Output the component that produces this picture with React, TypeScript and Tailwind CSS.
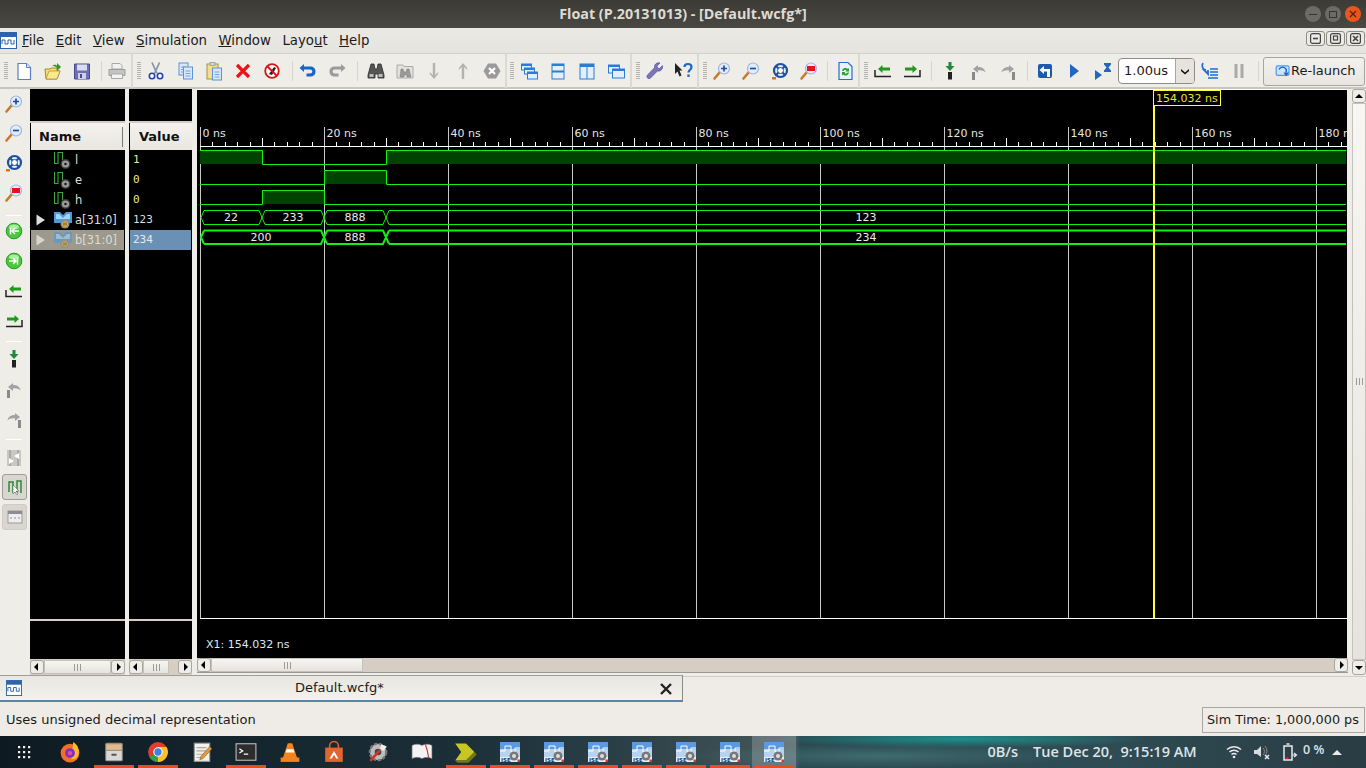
import React from "react";

const S = ({ children, s = 20, className = "" }: { children: React.ReactNode; s?: number; className?: string }) => (
  <svg width={s} height={s} viewBox="0 0 20 20" className={"shrink-0 " + className}>{children}</svg>
);

const IconNew = () => <S><path d="M4 2.500h8.500l4 4v12H4z" fill="#fff" stroke="#5b7fc0" strokeWidth="1.200" /><path d="M12.500 2.500v4h4" fill="#dfe8f7" stroke="#5b7fc0" /></S>;
const IconOpen = () => <S><path d="M2 8h5l1 -1h6v3h3l-3 8H3z" fill="#f7dc6f" stroke="#a78a2a" /><path d="M3 18l3-8h11l-3 8z" fill="#fbe98e" stroke="#a78a2a" strokeWidth=".7" /><path d="M9 5c3-2 4-1.500 5 0V2l4 4-4 4V7c-1-1.500-3-2-5-2z" fill="#2e9a22" /></S>;
const IconSave = () => <S><path d="M2.500 3h15v15h-15z" fill="#6f6fb8" stroke="#484a90" /><rect x="5" y="3.500" width="10" height="6" fill="#dcdcf0" /><rect x="6" y="12" width="8" height="6" fill="#cfcfe6" /><rect x="8" y="13" width="2" height="4" fill="#484a90" /></S>;
const IconPrint = () => <S><path d="M5 8V2.500h8l2 2V8z" fill="#f2f2f2" stroke="#a7a7a7" /><path d="M2 8.500h16v6H2z" fill="#c4c4c4" stroke="#9c9c9c" /><path d="M4.500 13h11v4.500h-11z" fill="#f4f4f4" stroke="#a7a7a7" /></S>;
const IconCut = () => <S><path d="M6 1.500l5 11M13.500 1.500l-5 11" stroke="#8b95a8" strokeWidth="1.800" fill="none" /><circle cx="6" cy="15" r="2.700" fill="#fff" stroke="#2643a8" strokeWidth="1.600" /><circle cx="14" cy="15" r="2.700" fill="#fff" stroke="#2643a8" strokeWidth="1.600" /></S>;
const Page = ({ x, y, w = 9, h = 12 }: { x: number; y: number; w?: number; h?: number }) => <g><rect x={x} y={y} width={w} height={h} fill="#d8e8fb" stroke="#5c93d6" /><path d={`M${x + 2} ${y + 4}h${w - 4}M${x + 2} ${y + 6.5}h${w - 4}M${x + 2} ${y + 9}h${w - 4}`} stroke="#5c93d6" strokeWidth=".8" /></g>;
const IconCopy = () => <S><Page x={4} y={2} /><Page x={8.500} y={6} /></S>;
const IconPaste = () => <S><rect x="3" y="3" width="11" height="15" fill="#f2df8b" stroke="#a79143" /><rect x="6" y="1.500" width="5" height="3" fill="#d2d2d2" stroke="#888" strokeWidth=".6" /><Page x={8.500} y={7} w={9} /></S>;
const IconDel = () => <S><path d="M4 4l12 12M16 4L4 16" stroke="#e9141a" strokeWidth="3.200" /></S>;
const IconStop = () => <S><circle cx="10" cy="10" r="6.800" fill="#fff" stroke="#d81418" strokeWidth="1.800" /><path d="M7 13l5-7 2 1-4 7z" fill="#222" /><path d="M5.500 5.500l9 9" stroke="#d81418" strokeWidth="1.800" /></S>;
const IconUndo = ({ c = "#1467c8", flip = false }: { c?: string; flip?: boolean }) => <S><g transform={flip ? "translate(20 0) scale(-1 1)" : undefined}><path d="M6 5.500h6c3.500 0 5.500 2 5.500 5s-2 5-5.500 5H8.500v-3H12c1.500 0 2.300-.7 2.300-2s-.8-2-2.300-2H6V11L1.500 7 6 3z" fill={c} /></g></S>;
const IconBino = ({ c = "#2b2b2b", f = "#555" }: { c?: string; f?: string }) => <S><path d="M5 3h3l1 5h2l1-5h3l3 11v3h-6v-4H9v4H2v-3z" fill={f} stroke={c} strokeWidth=".8" /><rect x="3.500" y="13" width="4" height="3" fill="#bbb" /><rect x="12.500" y="13" width="4" height="3" fill="#bbb" /></S>;
const IconFolderBino = () => <S><path d="M2 4h6l1 1.500h9V17H2z" fill="#e4e2dd" stroke="#aaa" /><path d="M6 8h2l1 3h2l1-3h2l2 8h-4v-2H9v2H5z" fill="#999" stroke="#777" strokeWidth=".5" /></S>;
const IconArrowV = ({ up = false }: { up?: boolean }) => <S><g transform={up ? "rotate(180 10 10)" : undefined}><path d="M8.800 2h2.400v12l3-3v2l-4.200 5-4.200-5v-2l3 3z" fill="#b4b2ad" /></g></S>;
const IconHexX = () => <S><path d="M6 2.500h8l4.500 7.500-4.500 7.500H6L1.500 10z" fill="#9a9a9a" /><path d="M7 7l6 6M13 7l-6 6" stroke="#fff" strokeWidth="2.200" /></S>;
const Win = ({ x, y, w, h, title = true }: { x: number; y: number; w: number; h: number; title?: boolean }) => <g><rect x={x} y={y} width={w} height={h} fill="#e3f0fc" stroke="#2b7dd4" />{title && <rect x={x} y={y} width={w} height={2} fill="#2b7dd4" />}</g>;
const IconCascade = () => <S><Win x={2.500} y={3} w={10} h={6} /><Win x={5.500} y={7} w={10} h={6} /><Win x={8.500} y={11} w={10} h={7} /></S>;
const IconHoriz = () => <S><rect x="4" y="3" width="12" height="15" fill="#e3f0fc" stroke="#2b7dd4" /><rect x="4" y="3" width="12" height="2" fill="#2b7dd4" /><rect x="4" y="9.500" width="12" height="2" fill="#2b7dd4" /></S>;
const IconVert = () => <S><rect x="3" y="3" width="14" height="15" fill="#e3f0fc" stroke="#2b7dd4" /><rect x="3" y="3" width="14" height="3" fill="#2b7dd4" /><path d="M10 3v15" stroke="#2b7dd4" /></S>;
const IconTwoWin = () => <S><Win x={2.500} y={4} w={11} h={8} /><Win x={6.500} y={8} w={12} h={9} /></S>;
const IconWrench = () => <S><path d="M17.500 4.500l-3 3-2-.5-.5-2 3-3c-3-.8-6 1.200-5.500 4.700L2.500 14a2 2 0 0 0 3 3l7-7c3 .8 5.800-2 5-5.500z" fill="#7a74bb" stroke="#4f4a94" strokeWidth=".6" /></S>;
const IconHelp = () => <S><path d="M1 2l7.500 7.500H5.500l2 5-2 1-2-5L1 13z" fill="#222" /><path d="M10.500 6c0-4 7-4 7 0 0 3-3 3-3 5.500" fill="none" stroke="#1d66cc" strokeWidth="2.200" /><rect x="13.300" y="13.500" width="2.400" height="2.400" fill="#1d66cc" /></S>;
const Mag = ({ children, s = 20 }: { children?: React.ReactNode; s?: number }) => <S s={s}><path d="M2.500 17.500L8 11" stroke="#c87a2c" strokeWidth="2.600" strokeLinecap="round" /><circle cx="12" cy="7.500" r="5.500" fill="#e2ecfb" stroke="#9fb5de" strokeWidth="1.200" />{children}</S>;
const IconZoomIn = ({ s }: { s?: number }) => <Mag s={s}><path d="M9 7.500h6M12 4.500v6" stroke="#1f4e9c" strokeWidth="1.700" /></Mag>;
const IconZoomOut = ({ s }: { s?: number }) => <Mag s={s}><path d="M9 7.500h6" stroke="#1f4e9c" strokeWidth="1.700" /></Mag>;
const IconZoomRed = ({ s }: { s?: number }) => <Mag s={s}><rect x="8" y="5" width="8" height="5" fill="#e8101c" /></Mag>;
const IconZoomFit = ({ s = 20 }: { s?: number }) => <S s={s}><circle cx="10.500" cy="9.500" r="6.500" fill="#e7effb" stroke="#1f4fa0" strokeWidth="2.200" /><path d="M6 5l9 9M15 5l-9 9" stroke="#1f4fa0" strokeWidth="2" /><circle cx="10.500" cy="9.500" r="3" fill="#fff" stroke="#1f4fa0" /><rect x="2" y="16" width="4" height="2.500" fill="#c87a2c" /></S>;
const IconRefresh = () => <S><path d="M4 1.500h9l4 4v13H4z" fill="#e8f1fd" stroke="#2b6cc4" strokeWidth="1.200" /><path d="M7 10a3.500 3.500 0 0 1 6-2l1-1v3.500h-3.500l1-1a2 2 0 0 0-3 .5zM14 11.500a3.500 3.500 0 0 1-6 2l-1 1V11h3.500l-1 1a2 2 0 0 0 3-.5z" fill="#2aa12a" /></S>;
const IconMarkL = () => <S><path d="M2 9v6.500h16" fill="none" stroke="#222" strokeWidth="1.500" /><path d="M5 8L9.500 4v2.500H17v3H9.500V12z" fill="#1f9a1a" /></S>;
const IconMarkR = () => <S><path d="M18 9v6.500H2" fill="none" stroke="#222" strokeWidth="1.500" /><path d="M15 8l-4.500-4v2.500H3v3h7.500V12z" fill="#1f9a1a" /></S>;
const IconStepDown = () => <S><path d="M8.500 1h3v4h3l-4.500 5-4.500-5h3z" fill="#1f8a3a" /><rect x="8" y="11" width="4" height="7.500" fill="#222" /></S>;
const IconStepL = () => <S><rect x="3" y="11" width="3" height="8" fill="#8a8a8a" /><path d="M9 4L4 8l5 4V9.500c3-.5 6 .5 7.500 2C16 8 13 5.800 9 6z" fill="#a3a3a3" /></S>;
const IconStepR = () => <S><rect x="14" y="11" width="3" height="8" fill="#8a8a8a" /><path d="M11 4l5 4-5 4V9.500c-3-.5-6 .5-7.500 2C4 8 7 5.800 11 6z" fill="#a3a3a3" /></S>;
const IconRestart = () => <S><rect x="3" y="3" width="14" height="14" rx="2" fill="#1d59ac" /><path d="M9 5L4.500 9 9 13v-2.500h3V16h3V8H9z" fill="#fff" /></S>;
const IconPlay = () => <S><path d="M6 3l9 7-9 7z" fill="#2067bf" /></S>;
const IconRunFor = () => <S><path d="M2 9l7 5-7 5z" fill="#2067bf" /><path d="M11 2h7v1.500l-2.500 3 2.500 3V11h-7V9.500l2.500-3-2.500-3z" fill="#2067bf" /></S>;
const IconBreak = () => <S><path d="M3 2c-2 3 0 7 3 7l-2 0 4 4V9" fill="none" stroke="#1d6fd0" strokeWidth="1.800" /><path d="M10 8h8M10 11h8M10 14h8M8 17h10" stroke="#1d6fd0" strokeWidth="1.300" /></S>;
const IconPause = () => <S><rect x="5.500" y="3" width="3" height="14" fill="#aaa" /><rect x="11.500" y="3" width="3" height="14" fill="#aaa" /></S>;
const IconRelaunch = () => <S s={16}><rect x="1.500" y="3.500" width="16" height="12" rx="2" fill="#cfe4fb" stroke="#4e9ae8" strokeWidth="1.500" /><path d="M5 8a5 5 0 0 1 9 0v4" fill="none" stroke="#1c64c4" strokeWidth="1.800" /><path d="M10.500 12l3.500 4.500 3.500-4.500z" fill="#1c64c4" /></S>;

const Cell = ({ children }: { children: React.ReactNode }) => <div className="w-[29px] h-[34px] flex items-center justify-center shrink-0">{children}</div>;
const Sep = ({ className }: { className: string }) => <div className={"w-[1px] h-[20px] bg-[#d9d6d0] shrink-0 " + className} />;
const Handle = ({ className }: { className: string }) => <div className={"w-[4px] h-[18px] shrink-0 bg-[repeating-linear-gradient(180deg,#b5b3ad_0px,#b5b3ad_1px,#efede8_1px,#efede8_2px)] " + className} />;
const Section = ({ children, className }: { children: React.ReactNode; className: string }) => <div className={"flex items-center h-[34px] shrink-0 border-r-2 border-r-[#dcd9d3] " + className}>{children}</div>;

const Toolbar = () => (
  <div className="h-[35px] flex bg-[#efede8] border-b-2 border-b-[#c9c6c0] items-start shrink-0 relative">
    <Section className="w-[133px]">
      <Handle className="ml-[4px] mr-[1px]" />
      <Cell><IconNew /></Cell><Cell><IconOpen /></Cell><Cell><IconSave /></Cell>
      <Sep className="ml-[5px]" />
      <Cell><IconPrint /></Cell>
    </Section>
    <Section className="w-[374px]">
      <Handle className="ml-[4px]" />
      <Cell><IconCut /></Cell><Cell><IconCopy /></Cell><Cell><IconPaste /></Cell><Cell><IconDel /></Cell><Cell><IconStop /></Cell>
      <Sep className="ml-[6px]" />
      <Cell><IconUndo /></Cell><Cell><IconUndo c="#9b9b9b" flip /></Cell>
      <Sep className="ml-[6px] mr-[3px]" />
      <Cell><IconBino /></Cell><Cell><IconFolderBino /></Cell><Cell><IconArrowV /></Cell><Cell><IconArrowV up /></Cell><Cell><IconHexX /></Cell>
    </Section>
    <Section className="w-[125px]">
      <Handle className="ml-[3px]" />
      <Cell><IconCascade /></Cell><Cell><IconHoriz /></Cell><Cell><IconVert /></Cell><Cell><IconTwoWin /></Cell>
    </Section>
    <Section className="w-[67px]">
      <Handle className="ml-[4px]" />
      <Cell><IconWrench /></Cell><Cell><IconHelp /></Cell>
    </Section>
    <Section className="w-[161px]">
      <Handle className="ml-[4px]" />
      <Cell><IconZoomIn /></Cell><Cell><IconZoomOut /></Cell><Cell><IconZoomFit /></Cell><Cell><IconZoomRed /></Cell>
      <Sep className="ml-[4px] mr-[2px]" />
      <Cell><IconRefresh /></Cell>
    </Section>
    <div className="flex items-center h-[34px] grow">
      <Handle className="ml-[4px]" />
      <Cell><IconMarkL /></Cell><Cell><IconMarkR /></Cell>
      <Sep className="ml-[5px] mr-[3px]" />
      <Cell><IconStepDown /></Cell><Cell><IconStepL /></Cell><Cell><IconStepR /></Cell>
      <Sep className="ml-[5px] mr-[2px]" />
      <Cell><IconRestart /></Cell><Cell><IconPlay /></Cell><Cell><IconRunFor /></Cell>
      <div className="w-[77px] h-[26px] ml-[1px] flex border border-[#8f8c86] rounded-[4px] bg-white overflow-hidden shrink-0">
        <div className="w-[56px] text-[13px] text-[#1a1a1a] pl-[5px] leading-[24px]">1.00us</div>
        <div className="grow bg-[#e6e3dd] border-l border-[#a8a59f] flex items-center justify-center">
          <svg width="10" height="7" viewBox="0 0 10 7"><path d="M1 1l4 3.500L9 1v2L5 6.500 1 3z" fill="#111" /></svg>
        </div>
      </div>
      <Cell><IconBreak /></Cell><Cell><IconPause /></Cell>
      <Sep className="ml-[5px] mr-[4px]" />
      <div className="w-[102px] h-[29px] flex items-center border border-[#a8a59f] rounded-[3px] bg-[linear-gradient(#f3f1ed,#e9e6e1)] pl-[11px] shrink-0 text-[13px] text-[#1a1a1a]"><IconRelaunch /><span>Re-launch</span></div>
    </div>
  </div>
);

const SideCell = ({ children, className = "h-[30px]" }: { children: React.ReactNode; className?: string }) => <div className={"w-[26px] flex items-center justify-center shrink-0 " + className}>{children}</div>;
const SideSep = ({ className }: { className: string }) => <div className={"h-[1px] w-[16px] ml-[5px] bg-white shrink-0 " + className} />;
const GreenBall = ({ dir }: { dir: "l" | "r" }) => <S><circle cx="10" cy="10" r="7.800" fill="#48c83c" stroke="#2b9a26" /><ellipse cx="10" cy="6" rx="5" ry="2.500" fill="#a8ec9c" /><path d={dir === "l" ? "M6.500 6.500v7M15 10H8M11 7l-3 3 3 3" : "M13.500 6.500v7M5 10h7M9 7l3 3-3 3"} fill="none" stroke="#fff" strokeWidth="1.500" /></S>;

const SideBar = () => (
  <div className="w-[29px] shrink-0 bg-[#efede8] flex flex-col pl-[1px]">
    <SideCell className="h-[29px]"><IconZoomIn /></SideCell><SideCell><IconZoomOut /></SideCell><SideCell><IconZoomFit /></SideCell><SideCell><IconZoomRed /></SideCell>
    <SideSep className="mt-[7px]" />
    <SideCell><GreenBall dir="l" /></SideCell><SideCell><GreenBall dir="r" /></SideCell><SideCell><IconMarkL /></SideCell><SideCell><IconMarkR /></SideCell>
    <SideSep className="mt-[5px]" />
    <SideCell className="h-[30px] mt-[2px]"><IconStepDown /></SideCell><SideCell><IconStepL /></SideCell><SideCell><IconStepR /></SideCell>
    <SideSep className="mt-[5px]" />
    <SideCell className="h-[30px] mt-[3px]">
      <S><rect x="3" y="2" width="14" height="16" fill="#c9c7c2" /><path d="M6 2v16M14 2v16" stroke="#8e8c87" /><path d="M15 5l-5 3 5 3zM5 10l5 3-5 3z" fill="#fff" /></S>
    </SideCell>
    <div className="h-[26px] w-[25px] ml-[1px] mt-[1px] flex items-center justify-center border border-[#9f9c95] rounded-[3px] bg-[#d9d6cf] shrink-0">
      <S><path d="M4 15V5h4v10h4V4h4v12" fill="none" stroke="#2b8a3a" strokeWidth="1.500" /><path d="M8 8v9l2-2 2 3 1-1-2-3h3z" fill="#fff" stroke="#555" strokeWidth=".5" /></S>
    </div>
    <div className="h-[26px] w-[25px] ml-[1px] mt-[4px] flex items-center justify-center border border-[#cfccc5] rounded-[3px] bg-[#d9d6cf] shrink-0">
      <S><rect x="3" y="4" width="14" height="12" fill="#eee" stroke="#9a9a9a" /><rect x="3" y="4" width="14" height="3" fill="#8d8d8d" /><path d="M6 10v2M10 10v2M14 10v2" stroke="#8d8d8d" /></S>
    </div>
  </div>
);

const Arrow = ({ d }: { d: "l" | "r" | "u" | "dn" }) => {
  const p = { l: "M6 1v8L2 5z", r: "M4 1v8l4-4z", u: "M1 7h8L5 3z", dn: "M1 3h8L5 7z" }[d];
  return <svg width="10" height="10" viewBox="0 0 10 10"><path d={p} fill="#000" /></svg>;
};
const Btn = ({ d, className = "w-[14px]" }: { d: "l" | "r" | "u" | "dn"; className?: string }) => <div className={"flex items-center justify-center shrink-0 border border-[#a9a69f] rounded-[3px] bg-[#efede8] " + className}><Arrow d={d} /></div>;
const Thumb = ({ className }: { className: string }) => <div className={"flex items-center justify-center shrink-0 border border-[#c5c2bb] bg-[linear-gradient(#f7f6f3,#e6e3de)] " + className}><div className="w-[7px] h-[7px] bg-[repeating-linear-gradient(90deg,#9d9a94_0px,#9d9a94_1px,transparent_1px,transparent_3px)]" /></div>;

const WaveGlyph = () => (
  <svg width="20" height="20" viewBox="0 0 20 20" className="shrink-0">
    <path d="M1.500 2V13.500H5V2.500H9.500V13" fill="none" stroke="#3aa83a" strokeWidth="1.100" />
    <circle cx="12.500" cy="14" r="5" fill="#3a3a3a" />
    <circle cx="12.500" cy="14" r="3.600" fill="#9a9a9a" />
    <circle cx="12.500" cy="14" r="1.200" fill="#111" />
  </svg>
);
const BusGlyph = ({ dim = false }: { dim?: boolean }) => (
  <svg width="20" height="20" viewBox="0 0 20 20" className={"shrink-0 " + (dim ? "opacity-60" : "")}>
    <path d="M1 2h6l3 3 3-3h6v11H1z" fill="#4d9ad9" />
    <path d="M3 4h3l4 4 4-4h3v5H3z" fill="#a6d4f5" />
    <circle cx="12" cy="14" r="4.500" fill="#8c8c8c" />
    <circle cx="12" cy="14" r="2.800" fill="#e8b53a" />
    <path d="M11 12.500v3M13 12.500v3" stroke="#6a4a00" />
  </svg>
);
const Tri = ({ dim = false }: { dim?: boolean }) => <svg width="10" height="12" viewBox="0 0 10 12" className="shrink-0"><path d="M0.500 0.500l8.500 5.500-8.500 5.500z" fill={dim ? "#d7d5cd" : "#dcdcdc"} /></svg>;

const rows = [
  { n: "l", v: "1" },
  { n: "e", v: "0" },
  { n: "h", v: "0" },
  { n: "a[31:0]", v: "123", bus: true },
  { n: "b[31:0]", v: "234", bus: true, sel: true },
];

const NameCol = () => (
  <div className="w-[95px] ml-[1px] shrink-0 flex flex-col bg-[#d2cec6]">
    <div className="h-[32px] bg-black shrink-0" />
    <div className="h-[27px] mt-[2px] bg-[linear-gradient(#f4f2ee,#e9e6e0)] shrink-0 flex items-center pl-[8px] font-bold text-[13px] text-[#111] border-l border-black"><span className="grow">Name</span><span className="w-[1px] h-[20px] bg-[#777] mr-[2px]" /></div>
    <div className="h-[469px] bg-black shrink-0 text-[11.500px] text-[#dcdcdc] pl-[1px]">
      {rows.map((r) => (
        <div key={r.n} className={"h-[20px] w-[93px] flex items-center " + (r.sel ? "bg-[#9d998c] " : "")}>
          <div className="w-[21px] pl-[5px] shrink-0 flex items-center">{r.bus && <Tri dim={r.sel} />}</div>
          <div className="ml-[1px]">{r.bus ? <BusGlyph dim={r.sel} /> : <WaveGlyph />}</div>
          <span className="ml-[2px] mt-[2px]">{r.n}</span>
        </div>
      ))}
    </div>
    <div className="h-[38px] mt-[2px] bg-black shrink-0" />
    <div className="h-[14px] mt-[1px] flex bg-[#d6cec5]">
      <Btn d="l" /><Thumb className="grow" /><Btn d="r" />
    </div>
  </div>
);

const ValueCol = () => (
  <div className="w-[63px] ml-[4px] shrink-0 flex flex-col bg-[#d2cec6]">
    <div className="h-[32px] bg-black shrink-0" />
    <div className="h-[27px] mt-[2px] bg-[linear-gradient(#f4f2ee,#e9e6e0)] shrink-0 flex items-center pl-[9px] font-bold text-[13px] text-[#111] border-l border-black">Value</div>
    <div className="h-[469px] bg-black shrink-0 text-[11px] font-['DejaVu_Sans_Mono',monospace] text-[#e8e88a] pl-[1px]">
      {rows.map((r) => (
        <div key={r.n} className={"h-[20px] w-[61px] pl-[3px] pt-[1px] flex items-center " + (r.sel ? "bg-[#6a90b6] text-[#e8e8e8]" : r.bus ? "text-[#dcdcdc]" : "")}>{r.v}</div>
      ))}
    </div>
    <div className="h-[38px] mt-[2px] bg-black shrink-0" />
    <div className="h-[14px] mt-[1px] flex bg-[#d6cec5]">
      <Btn d="l" /><Thumb className="w-[26px]" /><div className="grow" /><Btn d="r" />
    </div>
  </div>
);

const G = "#14ee14";
const DK = "#004200";
const grid = [200, 324, 448, 572, 696, 820, 944, 1068, 1192, 1316];
const gridLabels = ["0 ns", "20 ns", "40 ns", "60 ns", "80 ns", "100 ns", "120 ns", "140 ns", "160 ns", "180 n"];
const ticks: { x: number; i: number }[] = [];
for (let i = 0; 200 + i * 12.4 < 1347; i++) ticks.push({ x: Math.round(200 + i * 12.4), i });

const Sig = ({ t, b, on }: { t: number; b: number; on: [number, number][] }) => {
  const pts: string[] = [`M200 ${on[0][0] === 200 ? t + 0.5 : b + 0.5}`];
  let x = 200;
  on.forEach(([a, c]) => {
    if (a > x) pts.push(`H${a + 0.5}V${t + 0.5}`);
    pts.push(`H${c + 0.5}`);
    if (c < 1346) pts.push(`V${b + 0.5}`);
    x = c;
  });
  if (x < 1346) pts.push("H1346");
  return (
    <g>
      {on.map(([a, c]) => <rect key={a} x={a} y={t} width={c - a} height={b - t} fill={DK} />)}
      <path d={pts.join("")} fill="none" stroke={G} strokeWidth="1" />
    </g>
  );
};

const Bus = ({ t, b, xs, w }: { t: number; b: number; xs: number[]; w: number }) => {
  const m = (t + b) / 2;
  const dx = 3;
  const segs: string[] = [`M${xs[0] + dx} ${t}L${xs[0]} ${m}L${xs[0] + dx} ${b}`];
  for (let i = 0; i < xs.length; i++) {
    const a = xs[i];
    const c = xs[i + 1];
    if (c !== undefined) {
      segs.push(`M${a + dx} ${t}H${c - dx}L${c + dx} ${b}M${a + dx} ${b}H${c - dx}L${c + dx} ${t}`);
    } else {
      segs.push(`M${a + dx} ${t}H1346M${a + dx} ${b}H1346`);
    }
  }
  return <path d={segs.join("")} fill="none" stroke={G} strokeWidth={w} />;
};

const Wave = () => (
  <svg width="1150" height="569" viewBox="197 89 1150 569" className="block bg-black" fontFamily="'DejaVu Sans',sans-serif">
    <path d="M197 89.500H1347" stroke="#fff" />
    {grid.map((x, i) => (
      <g key={x}>
        <path d={`M${x + 0.5} 127V618`} stroke="#c8c8c8" />
        <text x={x + 2.500} y={137} fontSize="11" fill="#e6e6e6">{gridLabels[i]}</text>
      </g>
    ))}
    <path d="M200 146.500H1347" stroke="#fff" />
    {ticks.map(({ x, i }) => i % 10 === 0 ? null : <path key={x} d={`M${x + 0.5} ${i % 5 === 0 ? 138 : 142}V146`} stroke="#fff" />)}
    <path d="M200 618.500H1347" stroke="#fff" />
    <Sig t={150} b={164} on={[[200, 262], [386, 1346]]} />
    <Sig t={170} b={184} on={[[324, 386]]} />
    <Sig t={190} b={204} on={[[262, 324]]} />
    <Bus t={210.500} b={224.500} xs={[201, 262, 324, 386]} w={1} />
    <Bus t={230.500} b={244} xs={[201, 324, 386]} w={2} />
    <g fontSize="11" fill="#ececec" textAnchor="middle">
      <text x="231" y="221">22</text>
      <text x="293" y="221">233</text>
      <text x="355" y="221">888</text>
      <text x="866" y="221">123</text>
      <text x="261" y="241">200</text>
      <text x="355" y="241">888</text>
      <text x="866" y="241">234</text>
    </g>
    <path d="M1154 105V618" stroke="#ffff33" strokeWidth="2" />
    <rect x="1153.500" y="90.500" width="67" height="15" fill="#000" stroke="#ffff33" />
    <text x="1156" y="102" fontSize="11" fill="#e6e62a">154.032 ns</text>
    <text x="206" y="648" fontSize="11" fill="#dce8f5">X1: 154.032 ns</text>
  </svg>
);

const TaskCell = ({ children, on = false, active = false }: { children: React.ReactNode; on?: boolean; active?: boolean }) => (
  <div className={"w-[44px] h-[32px] flex items-center justify-center shrink-0 relative " + (active ? "bg-white/20" : "")}>
    {children}
    {on && <div className="absolute left-[2px] right-[2px] bottom-0 h-[3px] bg-[#e2501f]" />}
  </div>
);

const Ise = () => (
  <svg width="20" height="20" viewBox="0 0 20 20">
    <rect width="20" height="20" fill="#b8d3f0" />
    <rect width="20" height="7" fill="#5a9ae0" />
    <path d="M0 9h5V4h6v6h4V6h5" fill="none" stroke="#fff" />
    <rect y="15" width="20" height="5" fill="#e8eef6" />
    <text x="1" y="19.500" fontSize="5.500" fontFamily="'DejaVu Sans',sans-serif" fontWeight="700" fill="#223a66">ISE</text>
    <circle cx="14" cy="14" r="4.500" fill="#777" /><circle cx="14" cy="14" r="2" fill="#ddd" />
    <rect x="17.500" y="17.500" width="2.500" height="2.500" fill="#d33" />
  </svg>
);

const Taskbar = () => (
  <div className="h-[32px] shrink-0 flex items-center text-[14.500px] font-['Open_Sans',sans-serif] font-semibold text-[#dfe4e6] bg-[radial-gradient(ellipse_190px_9px_at_960px_3px,#1f8f8c,transparent),radial-gradient(ellipse_200px_12px_at_880px_20px,#3f6b6e,transparent),linear-gradient(90deg,#0e1a22_0px,#1b2f38_460px,#2a3f46_620px,#46585b_796px,#2a4a52_800px,#2f4c54_1100px,#2a3c44_1366px)]">
    <div className="w-[48px] flex justify-center shrink-0">
      <svg width="14" height="14" viewBox="0 0 14 14" fill="#f0f0f0">{[1, 6, 11].flatMap((y) => [1, 6, 11].map((x) => <rect key={x + "-" + y} x={x} y={y} width="2.200" height="2.200" />))}</svg>
    </div>
    <TaskCell><S s={22}><circle cx="10" cy="11" r="8.500" fill="#f56f23" /><path d="M13 1c5 3 6 9 4 13-2 3-5 3-6 2" fill="#ffbc2a" /><circle cx="10" cy="11" r="4.500" fill="#7c32c8" /><circle cx="10" cy="11" r="2" fill="#e84d8f" /></S></TaskCell>
    <TaskCell on><S s={22}><rect x="2" y="1.500" width="16" height="17" rx="1.500" fill="#8f8f8b" /><rect x="3" y="3" width="14" height="5" fill="#e5b98a" /><rect x="3" y="9" width="14" height="8.500" fill="#d9d8d4" /><rect x="7.500" y="11.500" width="5" height="2" rx="1" fill="#555" /></S></TaskCell>
    <TaskCell on><S s={22}><circle cx="10" cy="10" r="9" fill="#e33b2e" /><path d="M10 10L2.200 14.500A9 9 0 0 0 10 19z" fill="#2ba24c" /><path d="M10 10v9a9 9 0 0 0 7.800-13.500H10z" fill="#fbc02d" /><circle cx="10" cy="10" r="4.300" fill="#fff" /><circle cx="10" cy="10" r="3.300" fill="#3f7fe8" /></S></TaskCell>
    <TaskCell><S s={22}><rect x="3" y="2" width="14" height="16.500" fill="#f3f1ea" stroke="#999" /><path d="M5 6h9M5 9h9M5 12h7M5 15h5" stroke="#aaa" /><path d="M17 5l2 2-8 9-3 1 1-3z" fill="#e39a3a" stroke="#7a4b14" strokeWidth=".5" /></S></TaskCell>
    <TaskCell on><S s={22}><rect x="1" y="2.500" width="18" height="15" fill="#2d2d2d" stroke="#bbb" /><path d="M4 7l3 2-3 2M8 12h4" stroke="#fff" fill="none" strokeWidth="1.100" /></S></TaskCell>
    <TaskCell><S s={22}><path d="M8 2h4l4.500 13.500h-13z" fill="#f5841f" /><path d="M7 7.500h6l1 3H6z" fill="#fff" /><path d="M1.500 15h17v4h-17z" fill="#f5841f" /></S></TaskCell>
    <TaskCell><S s={22}><path d="M2 6h16v13H2z" fill="#e2642e" /><path d="M6 7V4.500a4 4 0 0 1 8 0V7" fill="none" stroke="#e2642e" strokeWidth="1.400" /><path d="M10 9l4 7h-2l-2-3.500L8 16H6z" fill="#fff" /></S></TaskCell>
    <TaskCell><S s={22}><circle cx="10" cy="10" r="7.500" fill="#bdbdbd" stroke="#777" strokeWidth="2" strokeDasharray="3 1.500" /><circle cx="10" cy="10" r="3" fill="#444" /><path d="M3 18L12 8" stroke="#c8392b" strokeWidth="2.400" /><path d="M13 3l5 2-3 4-3-2z" fill="#eee" /></S></TaskCell>
    <TaskCell><S s={22}><path d="M1 4c3-1.500 6-1.500 9 0 3-1.500 6-1.500 9 0v12c-3-1.500-6-1.500-9 0-3-1.500-6-1.500-9 0z" fill="#f3f3f3" stroke="#888" strokeWidth=".5" /><path d="M13 3c1.500 4 2.500 8 3 12" stroke="#c33" fill="none" /></S></TaskCell>
    <TaskCell on><S s={24}><path d="M1 3h9l7 7-7 7H1l5-7z" fill="#c8c622" /><path d="M1 17h9l7-7 2 2-7 7H3z" fill="#6f7a16" /></S></TaskCell>
    <TaskCell on><Ise /></TaskCell>
    <TaskCell on><Ise /></TaskCell>
    <TaskCell on><Ise /></TaskCell>
    <TaskCell on><Ise /></TaskCell>
    <TaskCell on><Ise /></TaskCell>
    <TaskCell on><Ise /></TaskCell>
    <TaskCell on active><Ise /></TaskCell>
    <div className="grow" />
    <span className="mr-[15px]">0B/s</span>
    <span className="w-[170px] whitespace-pre">Tue Dec 20,  9:15:19 AM</span>
    <div className="w-[24px] ml-[19px] flex justify-center"><svg width="16" height="14" viewBox="0 0 16 14" fill="none" stroke="#e8eaeb"><path strokeWidth="1.500" d="M1 4.500a10 10 0 0 1 14 0M3.500 7a6.500 6.500 0 0 1 9 0M5.500 9.500a3.500 3.500 0 0 1 5 0" /><circle cx="8" cy="12" r="1.300" fill="#e8eaeb" stroke="none" /></svg></div>
    <div className="w-[24px] ml-[4px] flex justify-center"><svg width="18" height="15" viewBox="0 0 18 15" fill="#d8dbdc"><path d="M1 5h3l4-4v11L4 9H1z" /><path d="M10 3a5 5 0 0 1 0 7M12 1a8 8 0 0 1 0 10" fill="none" stroke="#888" /><path d="M12 10l4 4M16 10l-4 4" stroke="#e8eaeb" strokeWidth="1.500" /></svg></div>
    <div className="w-[20px] ml-[6px] flex justify-center"><svg width="15" height="18" viewBox="0 0 15 18" fill="none" stroke="#e8eaeb"><path strokeWidth="1.500" d="M1 3h8v14H1zM3.500 1h3" /><rect x="2.500" y="14" width="3" height="2" fill="#e01a1a" stroke="none" /><path d="M9 12h4M11 10l2.500 2-2.500 2" strokeWidth="1.200" /></svg></div>
    <span className="ml-[3px] mb-[3px] text-[12.500px] w-[21px] whitespace-nowrap">0 %</span>
    <div className="ml-[8px] mr-[24px] w-0 h-0 border-l-[5px] border-r-[5px] border-b-[5px] border-transparent border-b-[#e8eaeb]" />
  </div>
);

const AppGlyph = ({ s }: { s: number }) => (
  <svg width={s} height={s} viewBox="0 0 17 17" className="shrink-0"><rect x=".5" y=".5" width="16" height="16" fill="#fff" stroke="#2f63a8" /><rect x="1" y="1" width="15" height="4" fill="#2f63a8" /><path d="M2 12V8h3v4h3V8h3v4h3V8" fill="none" stroke="#2f63a8" /></svg>
);

export default function App() {
  return (
    <div className="w-[1366px] h-[768px] overflow-hidden flex flex-col font-['DejaVu_Sans',sans-serif] bg-[#efece7]">
      <div className="h-[28px] shrink-0 bg-[linear-gradient(#3c3b37,#494842)] flex items-center relative">
        <div className="grow text-center text-[14.300px] font-['Open_Sans',sans-serif] font-bold text-[#dfdbd2]">Float (P.20131013) - [Default.wcfg*]</div>
        <div className="flex gap-[4px] absolute right-[5px] top-[6px]">
          <div className="w-[16px] h-[16px] rounded-full bg-[#6c6b66] flex items-center justify-center"><div className="w-[8px] h-[1px] bg-[#35342f]" /></div>
          <div className="w-[16px] h-[16px] rounded-full bg-[#6c6b66] flex items-center justify-center"><div className="w-[8px] h-[7px] border border-[#35342f]" /></div>
          <div className="w-[16px] h-[16px] rounded-full bg-[#e9541f] flex items-center justify-center"><svg width="8" height="8" viewBox="0 0 8 8"><path d="M1 1l6 6M7 1L1 7" stroke="#5a2008" strokeWidth="1.200" /></svg></div>
        </div>
      </div>
      <div className="h-[26px] shrink-0 bg-[linear-gradient(#ebe9e4,#e6e4df)] border-b border-b-[#d3d0c9] flex items-center text-[13.300px] text-[#1b1b1b] relative">
        <div className="mr-[5px]"><AppGlyph s={17} /></div>
        <span className="mr-[11.500px]"><u>F</u>ile</span>
        <span className="mr-[11.500px]"><u>E</u>dit</span>
        <span className="mr-[11.500px]"><u>V</u>iew</span>
        <span className="mr-[11.500px]"><u>S</u>imulation</span>
        <span className="mr-[11.500px]"><u>W</u>indow</span>
        <span className="mr-[11.500px]">Layo<u>u</u>t</span>
        <span><u>H</u>elp</span>
        <div className="ml-auto flex gap-[1px] mr-[1px] mb-[5px]">
          {["min", "max", "x"].map((k) => (
            <div key={k} className="w-[19px] h-[15px] border border-[#8e8b85] rounded-[3px] bg-[#eceae5] flex items-center justify-center">
              <svg width="11" height="11" viewBox="0 0 11 11" fill="none" stroke="#444" strokeWidth="1.200">
                <rect x=".6" y=".6" width="9.800" height="9.800" rx="2" />
                {k === "min" && <path d="M3 5.500h5" strokeWidth="1.600" />}
                {k === "max" && <rect x="3.500" y="3" width="4" height="4" />}
                {k === "x" && <path d="M3 3l5 5M8 3l-5 5" strokeWidth="1.600" />}
              </svg>
            </div>
          ))}
        </div>
      </div>
      <Toolbar />
      <div className="flex h-[586px] shrink-0 bg-[#efede8]">
        <SideBar />
        <NameCol />
        <ValueCol />
        <div className="w-[1151px] ml-[5px] shrink-0 flex flex-col">
          <Wave />
          <div className="h-[15px] flex bg-[#d6cec5] border-b border-[#9b9890]">
            <Btn d="l" /><Thumb className="w-[152px]" /><div className="grow" /><Btn d="r" />
          </div>
        </div>
        <div className="w-[14px] ml-[4px] flex flex-col shrink-0 bg-[#efede8]">
          <Btn d="u" className="h-[14px] w-full" />
          <Thumb className="grow w-full" />
          <Btn d="dn" className="h-[15px] w-full" />
        </div>
      </div>
      <div className="h-[27px] shrink-0 flex bg-[#efece7]">
        <div className="w-[683px] flex items-center bg-[linear-gradient(#e8e6e1,#f3f1ec)] border-b-[2px] border-b-[#5b84ab] border-r border-r-[#8a8a85] border-t border-t-[#a09d96] relative text-[13px] text-[#1b1b1b]">
          <div className="ml-[6px]"><AppGlyph s={16} /></div>
          <span className="ml-[273px]">Default.wcfg*</span>
          <svg width="14" height="14" viewBox="0 0 14 14" className="absolute left-[659px] top-[6px]"><path d="M2 2l10 10M12 2L2 12" stroke="#222" strokeWidth="2.400" /></svg>
        </div>
        <div className="grow mt-[1px] border-t border-t-[#d0cdc6]" />
      </div>
      <div className="h-[34px] shrink-0 flex items-center bg-[#efece7] text-[13px] text-[#1b1b1b] pl-[6px]">
        <span className="grow mt-[1px]">Uses unsigned decimal representation</span>
        <div className="w-[163px] h-[26px] mt-[1px] mr-[1px] border border-[#a9a69f] flex items-center pl-[4px] whitespace-nowrap text-[12.800px]">Sim Time: 1,000,000 ps</div>
      </div>
      <Taskbar />
    </div>
  );
}
